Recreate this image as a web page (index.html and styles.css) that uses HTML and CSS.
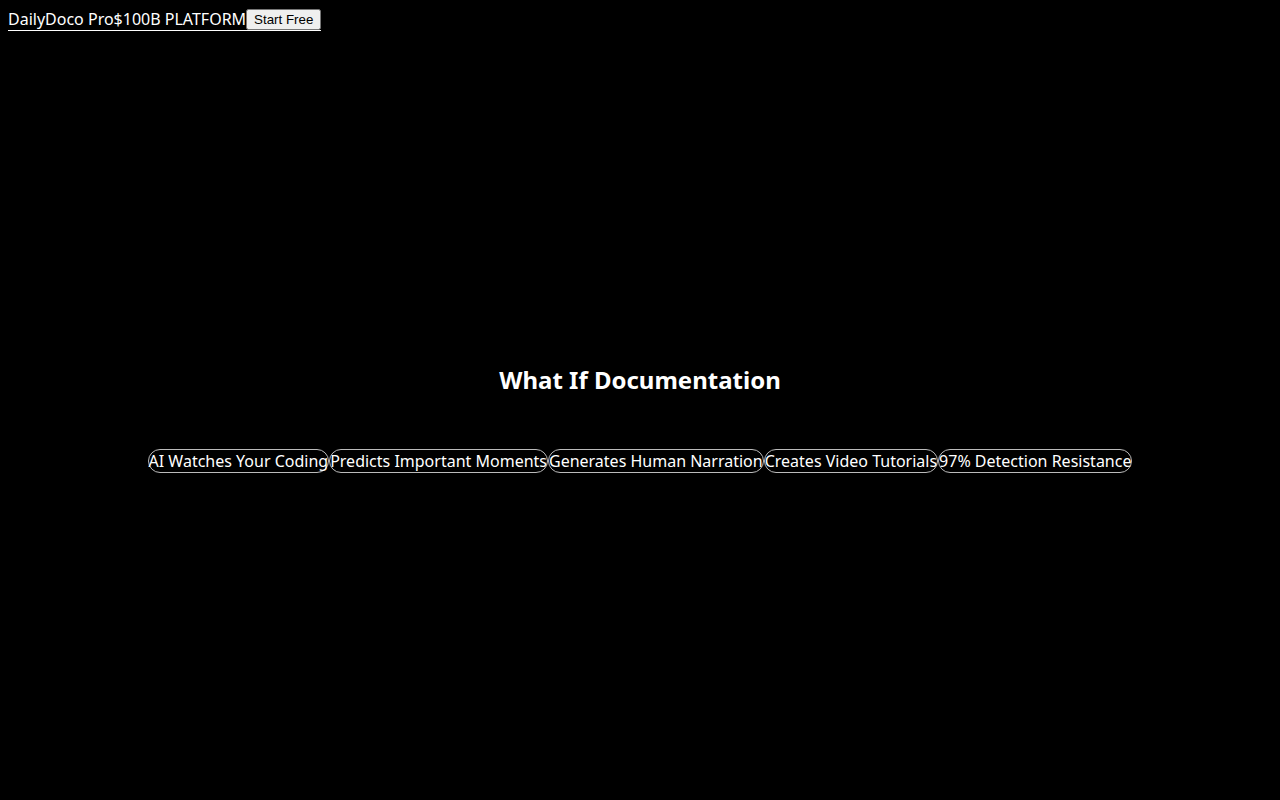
FILE: index.html
```html
<!DOCTYPE html>
<html lang="en">
<head>
<meta charset="utf-8">
<title>DailyDoco Pro</title>
<link rel="stylesheet" href="styles.css">
</head>
<body>
<header class="topbar">
  <span class="brand">DailyDoco Pro</span><span class="tag">$100B PLATFORM</span><button class="cta">Start Free</button>
</header>
<main class="hero">
  <h1 class="title">What If Documentation</h1>
  <div class="pills">
    <span class="pill">AI Watches Your Coding</span>
    <span class="pill">Predicts Important Moments</span>
    <span class="pill">Generates Human Narration</span>
    <span class="pill">Creates Video Tutorials</span>
    <span class="pill">97% Detection Resistance</span>
  </div>
</main>
</body>
</html>
```
FILE: styles.css
```css
html, body {
  background: #000;
}
body {
  margin: 8px;
  color: #fff;
  font-family: "Noto Sans", "Open Sans", sans-serif;
  font-size: 16px;
}
.topbar {
  display: inline-flex;
  align-items: center;
  border-bottom: 1px solid #fff;
}
.cta {
  font-family: "Liberation Sans", Arial, sans-serif;
  font-size: 13.33px;
}
.hero {
  display: flex;
  flex-direction: column;
  align-items: center;
  padding-top: 332px;
}
.title {
  margin: 0;
  font-size: 24px;
  font-weight: 700;
}
.pills {
  display: flex;
  gap: 0;
  margin-top: 53px;
}
.pill {
  border: 1px solid #bbb;
  border-radius: 12px;
  line-height: 22px;
}
```
